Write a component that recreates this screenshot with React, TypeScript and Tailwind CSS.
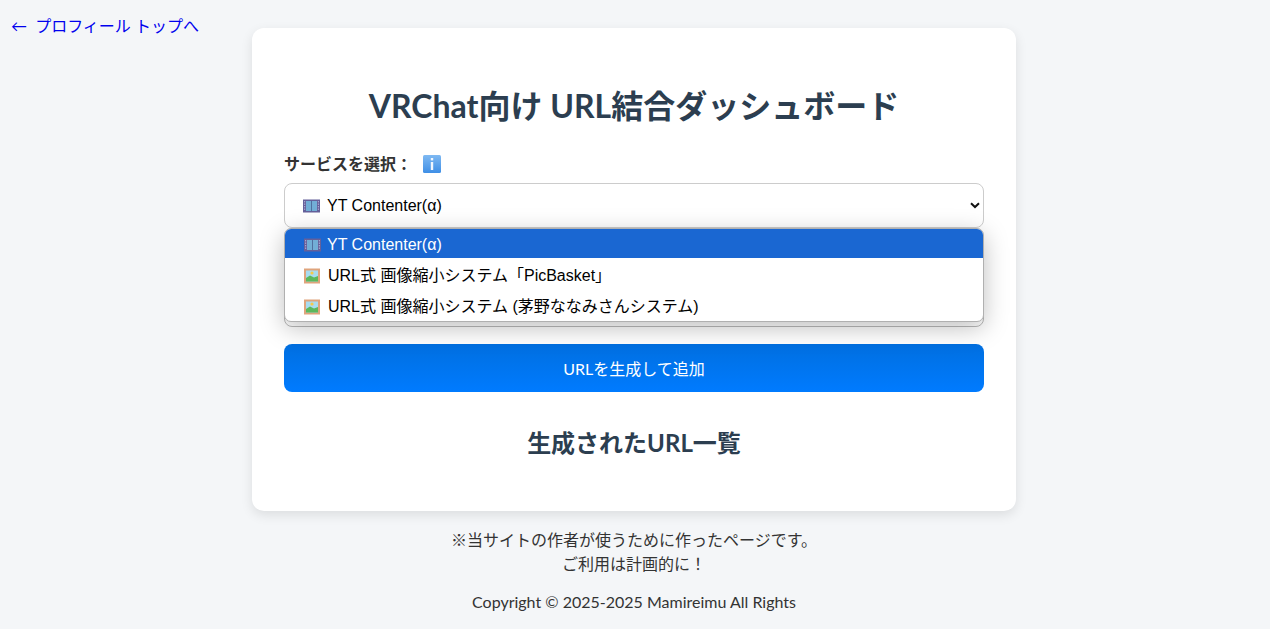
const FONT = "font-['Lato','Noto_Sans_CJK_JP',sans-serif]";
const ARIAL = "font-['Liberation_Sans','Noto_Sans_CJK_JP',sans-serif]";

function Film() {
  return (
    <svg width="17" height="14" viewBox="0 0 17 14" className="shrink-0">
      <rect x="0" y="0.5" width="17" height="13" fill="#65609a" />
      <rect x="3" y="2" width="11" height="10" fill="#72aed6" />
      <rect x="8" y="2" width="1" height="10" fill="#50709e" />
      {[2, 4.5, 7, 9.5].map((y) => (
        <g key={y}>
          <rect x="1" y={y} width="1.2" height="1.4" fill="#a9a6cf" />
          <rect x="14.8" y={y} width="1.2" height="1.4" fill="#a9a6cf" />
        </g>
      ))}
    </svg>
  );
}

function Picture() {
  return (
    <svg width="16" height="16" viewBox="0 0 16 16" className="shrink-0">
      <rect x="0" y="0.5" width="16" height="15" fill="#dfa47c" />
      <rect x="2" y="2.5" width="12" height="11" fill="#a8dcf0" />
      <circle cx="8" cy="5" r="1.6" fill="#f7c948" />
      <path d="M2 10 L6 7.5 L10 9.5 L14 8 V13.5 H2 Z" fill="#5cb85c" />
    </svg>
  );
}

function Info() {
  return (
    <svg width="18" height="18" viewBox="0 0 18 18" className="shrink-0">
      <defs>
        <linearGradient id="infoGrad" x1="0" y1="0" x2="0" y2="1">
          <stop offset="0" stopColor="#7fb9f2" />
          <stop offset="1" stopColor="#3f8fe6" />
        </linearGradient>
      </defs>
      <rect width="18" height="18" rx="1.5" fill="url(#infoGrad)" />
      <rect x="7.8" y="3" width="2.4" height="2.4" fill="#f2f7fd" />
      <rect x="7.8" y="7" width="2.4" height="8" fill="#f2f7fd" />
    </svg>
  );
}

function Option({ icon, label, className }: { icon: React.ReactNode; label: string; className: string }) {
  return (
    <div className={`flex items-center pl-[19px] ${className}`}>
      {icon}
      <span>{label}</span>
    </div>
  );
}

export default function App() {
  return (
    <div className={`relative h-[629px] overflow-hidden bg-[#f4f6f8] pr-[2px] ${FONT}`}>
      <a href="#" className="absolute left-[11px] top-[15px] text-[16px] leading-[22px] text-[#0000ee]">
        ←&nbsp; プロフィール トップへ
      </a>
      <div className="flex flex-col items-center pt-[28px]">
        <div className="relative h-[483px] w-[764px] rounded-[12px] bg-white px-[32px] pt-[54px] shadow-[0_4px_12px_rgba(0,0,0,0.1)]">
          <h1 className="text-center text-[32px] font-bold leading-[48px] text-[#2c3e50]">VRChat向け URL結合ダッシュボード</h1>
          <div className="mt-[22px] flex h-[24px] items-center text-[16px] font-bold leading-[24px] text-[#333333]">
            <span>サービスを選択：</span>
            <span className="ml-[11px]"><Info /></span>
          </div>
          <div className={`relative mt-[7px] flex h-[45px] items-center rounded-[8px] border border-[#cccccc] bg-white pl-[18px] pr-[2px] text-[16px] text-black ${ARIAL}`}>
            <Film />
            <span className="ml-[7px]">YT Contenter(α)</span>
            <svg width="10" height="7" viewBox="0 0 10 7" className="ml-auto mr-[1px]">
              <path d="M1 1.2 L5 5 L9 1.2" fill="none" stroke="#111" strokeWidth="2" />
            </svg>
          </div>
          <div className="mt-[17px] h-[82px] rounded-[8px] border border-[#bbbbbb] bg-white" />
          <button className="mt-[17px] block h-[48px] w-full rounded-[8px] bg-gradient-to-b from-[#006fe0] to-[#007bff] pt-[1px] text-[16px] text-white">
            URLを生成して追加
          </button>
          <h2 className="mt-[33px] text-center text-[24px] font-bold leading-[36px] text-[#2c3e50]">生成されたURL一覧</h2>

          <div className={`absolute left-[32px] top-[200px] w-[700px] overflow-hidden rounded-[7px] border border-[#b0b0b0] bg-white text-[16px] shadow-[0_6px_24px_rgba(0,0,0,0.25)] ${ARIAL}`}>
            <Option className="h-[29px] gap-[6px] bg-[#1a67d2] pt-[2px] text-white" icon={<Film />} label="YT Contenter(α)" />
            <Option className="h-[33px] gap-[8px] pt-[2px] text-black" icon={<Picture />} label="URL式 画像縮小システム「PicBasket」" />
            <Option className="h-[30px] gap-[8px] pt-[1px] text-black" icon={<Picture />} label="URL式 画像縮小システム (茅野ななみさんシステム)" />
          </div>
        </div>
        <p className="mt-[17px] text-center text-[16px] leading-[24px] text-[#333333]">
          ※当サイトの作者が使うために作ったページです。
          <br />
          ご利用は計画的に！
        </p>
        <p className="mt-[15px] text-center text-[16px] leading-[22px] text-[#333333]">Copyright © 2025-2025 Mamireimu All Rights</p>
      </div>
    </div>
  );
}
